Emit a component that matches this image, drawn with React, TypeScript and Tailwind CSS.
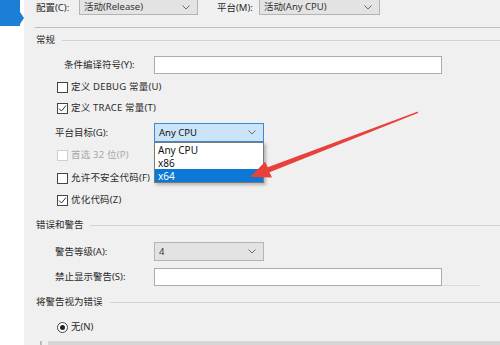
import React from 'react';

const font = { fontFamily: '"Noto Sans", "Noto Sans CJK SC", sans-serif' };

const Chevron = ({ color = '#6b6b6b' }: { color?: string }) => (
  <svg width="8" height="5" viewBox="0 0 8 5" className="shrink-0">
    <polyline points="0.5,0.5 4,4 7.5,0.5" fill="none" stroke={color} strokeWidth="1" />
  </svg>
);

const Select = ({ value, width, focused = false, cutTop = false }: { value: string; width: string; focused?: boolean; cutTop?: boolean }) => (
  <div
    className={`${width} h-full flex items-center justify-between pl-[4px] pr-[7px] border ${cutTop ? 'border-t-0' : ''} ${
      focused ? 'bg-[#cce4f7] border-[#3c8bd6] text-[#111]' : 'bg-[#e3e3e3] border-[#b4b4b4] text-[#333]'
    }`}
  >
    <span>{value}</span>
    <Chevron />
  </div>
);

const Check = ({ checked = false, disabled = false }: { checked?: boolean; disabled?: boolean }) => (
  <div
    className={`w-[11px] h-[11px] border bg-white flex items-center justify-center shrink-0 ${
      disabled ? 'border-[#cfcfcf] bg-[#f4f4f4]' : 'border-[#444]'
    }`}
  >
    {checked && (
      <svg width="9" height="9" viewBox="0 0 9 9">
        <polyline points="1,4.5 3.5,7 8,1.5" fill="none" stroke="#333" strokeWidth="1" />
      </svg>
    )}
  </div>
);

const CheckRow = ({ label, checked, disabled, mt }: { label: string; checked?: boolean; disabled?: boolean; mt: string }) => (
  <div className={`${mt} h-[14px] flex items-center pl-[33px] gap-[3px]`}>
    <Check checked={checked} disabled={disabled} />
    <span className={`tracking-[0.2px] ${disabled ? 'text-[#a8a8a8]' : 'text-[#2a2a2a]'}`}>{label}</span>
  </div>
);

const Header = ({ label, mt, lineGap }: { label: string; mt: string; lineGap: string }) => (
  <div className={`${mt} h-[14px] flex items-center pl-[12px]`}>
    <span className="text-[#2a2a2a]">{label}</span>
    <div className={`flex-1 h-px bg-[#d2d2d2] ${lineGap}`} />
  </div>
);

export default function App() {
  return (
    <div className="relative w-[500px] h-[345px] flex overflow-hidden bg-white text-[9.5px] leading-none" style={font}>
      {/* left strip with selected tab */}
      <div className="w-[24px] shrink-0 bg-white">
        <div className="flex h-[26px]">
          <div className="w-[20px] h-full bg-[#1b7fd6]" />
          <div className="w-0 h-0 mt-[12px] border-y-[6px] border-y-transparent border-l-[4px] border-l-[#1b7fd6]" />
        </div>
      </div>

      {/* property page */}
      <div className="flex-1 bg-[#f0f0f0] flex flex-col">
        {/* configuration row */}
        <div className="h-[15px] flex items-center">
          <span className="ml-[12px] w-[43px] text-[#2a2a2a]">配置(C):</span>
          <Select value="活动(Release)" width="w-[119px]" cutTop />
          <span className="ml-[19px] w-[42px] text-[#2a2a2a]">平台(M):</span>
          <Select value="活动(Any CPU)" width="w-[121px]" cutTop />
        </div>
        <div className="mt-[12px] ml-[11px] h-px bg-[#bdbdbd]" />

        <Header label="常规" mt="mt-[5px]" lineGap="ml-[7px]" />

        <div className="mt-[9px] h-[18px] flex items-center">
          <span className="ml-[40px] w-[90px] text-[#2a2a2a]">条件编译符号(Y):</span>
          <div className="w-[288px] h-full bg-white border border-[#acacac]" />
        </div>

        <CheckRow label="定义 DEBUG 常量(U)" mt="mt-[6px]" />
        <CheckRow label="定义 TRACE 常量(T)" checked mt="mt-[7px]" />

        <div className="mt-[8px] h-[19px] flex items-center">
          <span className="ml-[31px] w-[99px] text-[#2a2a2a]">平台目标(G):</span>
          <Select value="Any CPU" width="w-[110px]" focused />
        </div>

        <CheckRow label="首选 32 位(P)" disabled mt="mt-[6px]" />
        <CheckRow label="允许不安全代码(F)" mt="mt-[9px]" />
        <CheckRow label="优化代码(Z)" checked mt="mt-[8px]" />

        <Header label="错误和警告" mt="mt-[11px]" lineGap="ml-[6px]" />

        <div className="mt-[10px] h-[19px] flex items-center">
          <span className="ml-[31px] w-[99px] text-[#2a2a2a]">警告等级(A):</span>
          <Select value="4" width="w-[110px]" />
        </div>

        <div className="mt-[7px] h-[18px] flex items-center">
          <span className="ml-[31px] w-[99px] text-[#2a2a2a]">禁止显示警告(S):</span>
          <div className="w-[288px] h-full bg-white border border-[#acacac]" />
          <div className="self-end w-[38px] h-px bg-[#dcdcdc]" />
        </div>

        <Header label="将警告视为错误" mt="mt-[9px]" lineGap="ml-[7px]" />

        <div className="mt-[11px] h-[14px] flex items-center pl-[33px] gap-[3px]">
          <div className="w-[11px] h-[11px] rounded-full border border-[#444] bg-white flex items-center justify-center">
            <div className="w-[5px] h-[5px] rounded-full bg-[#222]" />
          </div>
          <span className="text-[#2a2a2a]">无(N)</span>
        </div>

        <div className="mt-[7px] flex h-[4px]">
          <div className="ml-[16px] w-[2px] h-full bg-[#bbb]" />
          <div className="ml-[6px] flex-1 h-full bg-[#d6d6d6]" />
        </div>
      </div>

      {/* open dropdown list */}
      <div className="absolute left-[154px] top-[142px] w-[110px] bg-white border border-[#7a7a7a] shadow-[2px_2px_3px_rgba(0,0,0,0.25)] flex flex-col text-[10px]">
        <div className="h-[13px] flex items-center pl-[3px] text-[#111]">Any CPU</div>
        <div className="h-[13px] flex items-center pl-[3px] text-[#111]">x86</div>
        <div className="h-[13px] flex items-center pl-[3px] bg-[#0a78d4] text-white">x64</div>
      </div>

      {/* red annotation arrow */}
      <svg className="absolute left-0 top-0 pointer-events-none" width="500" height="345" viewBox="0 0 500 345">
        <polygon
          points="418,111.5 267.7,167.2 265.2,161.8 250,177 272,177.6 269.5,172.2 418,113"
          fill="#e8403a"
        />
      </svg>
    </div>
  );
}
